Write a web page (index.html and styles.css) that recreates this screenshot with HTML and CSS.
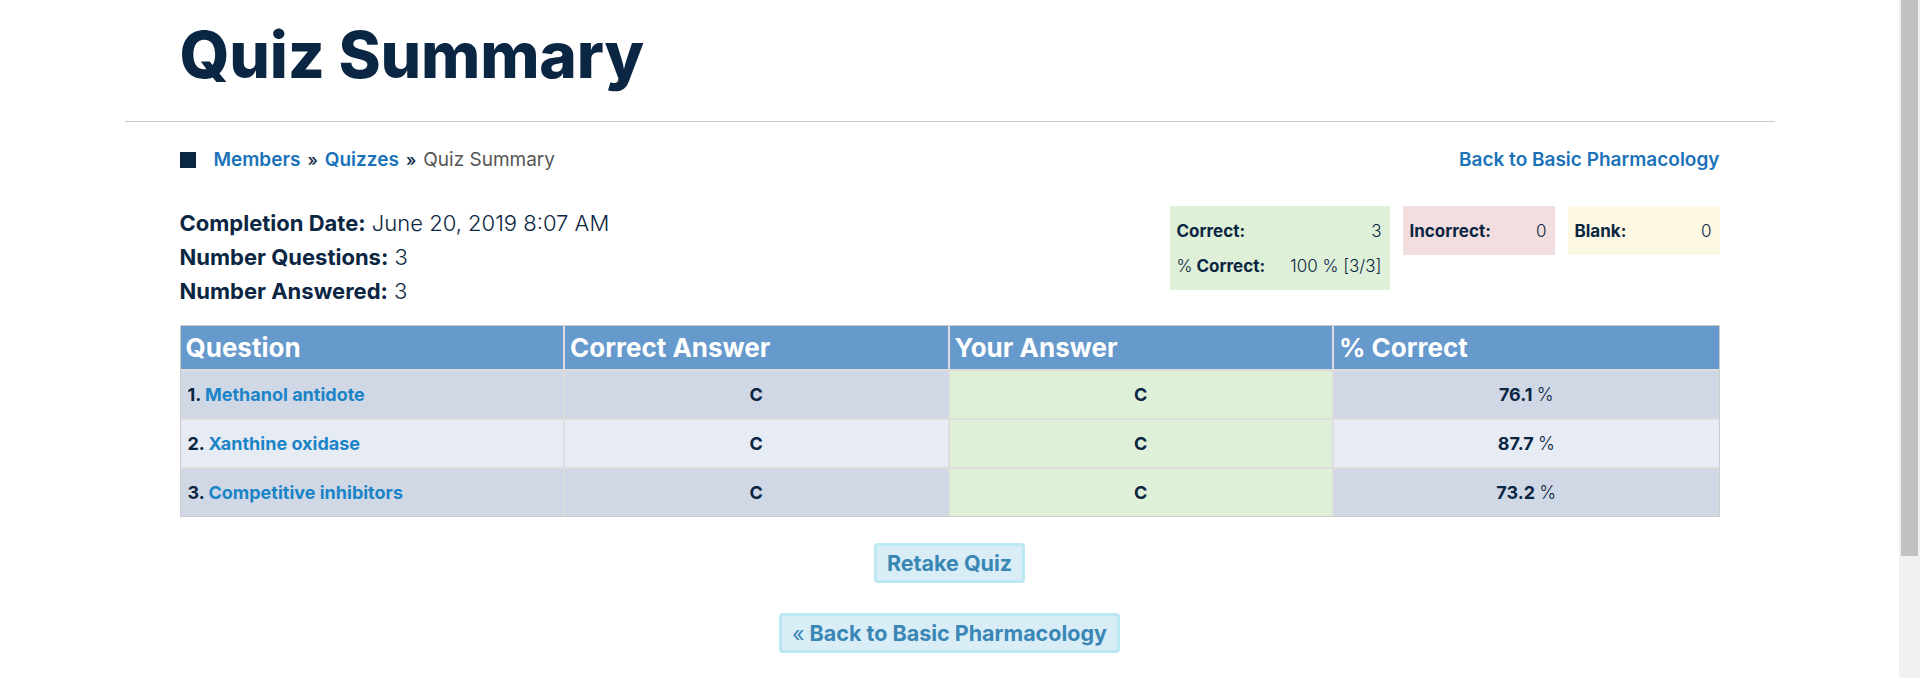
FILE: index.html
```html
<!DOCTYPE html>
<html lang="en">
<head>
<meta charset="utf-8">
<title>Quiz Summary</title>
<link rel="stylesheet" href="styles.css">
</head>
<body>
<div class="page">
  <div class="main">
    <div class="container">
      <header class="header">
        <h1 class="title">Quiz Summary</h1>
      </header>
      <div class="content">
        <div class="crumbs-row">
          <nav class="crumbs">
            <span class="crumb-icon"></span>
            <a class="crumb-link" href="#">Members</a>
            <span class="sep">»</span>
            <a class="crumb-link" href="#">Quizzes</a>
            <span class="sep">»</span>
            <span class="crumb-current">Quiz Summary</span>
          </nav>
          <a class="back-link" href="#">Back to Basic Pharmacology</a>
        </div>

        <div class="summary">
          <div class="info">
            <div class="info-line"><b>Completion Date:</b> June 20, 2019 8:07 AM</div>
            <div class="info-line"><b>Number Questions:</b> 3</div>
            <div class="info-line"><b>Number Answered:</b> 3</div>
          </div>
          <div class="stats">
            <div class="stat stat-correct">
              <span class="lbl">Correct:</span><span class="val">3</span>
              <span class="lbl"><span class="reg">%</span> Correct:</span><span class="val">100 % [3/3]</span>
            </div>
            <div class="stat stat-incorrect">
              <span class="lbl">Incorrect:</span><span class="val">0</span>
            </div>
            <div class="stat stat-blank">
              <span class="lbl">Blank:</span><span class="val">0</span>
            </div>
          </div>
        </div>

        <table class="results">
          <thead>
            <tr><th>Question</th><th>Correct Answer</th><th>Your Answer</th><th>% Correct</th></tr>
          </thead>
          <tbody>
            <tr>
              <td class="q">1. <a href="#">Methanol antidote</a></td>
              <td class="c">C</td>
              <td class="c yours">C</td>
              <td class="c">76.1 <span class="reg">%</span></td>
            </tr>
            <tr>
              <td class="q">2. <a href="#">Xanthine oxidase</a></td>
              <td class="c">C</td>
              <td class="c yours">C</td>
              <td class="c">87.7 <span class="reg">%</span></td>
            </tr>
            <tr>
              <td class="q">3. <a href="#">Competitive inhibitors</a></td>
              <td class="c">C</td>
              <td class="c yours">C</td>
              <td class="c">73.2 <span class="reg">%</span></td>
            </tr>
          </tbody>
        </table>

        <div class="actions">
          <a class="btn" href="#">Retake Quiz</a>
          <a class="btn" href="#"><span class="laquo">«</span> Back to Basic Pharmacology</a>
        </div>
      </div>
    </div>
  </div>
  <div class="scrollbar"><div class="thumb"></div></div>
</div>
</body>
</html>
```

FILE: styles.css
```css
html, body {
  margin: 0;
  padding: 0;
  background: #ffffff;
}

body {
  font-family: Inter, "Liberation Sans", sans-serif;
  color: #0b2642;
}

a {
  text-decoration: none;
}

.page {
  display: flex;
  height: 678px;
  overflow: hidden;
}

.main {
  flex: 1;
  min-width: 0;
}

.container {
  width: 1650px;
  margin: 0 auto;
}

.header {
  height: 122px;
  box-sizing: border-box;
  padding: 23px 55px 0;
  border-bottom: 1px solid #cccccc;
}

.title {
  margin: 0;
  font-family: Inter, sans-serif;
  font-weight: 800;
  font-size: 64px;
  line-height: 1;
  color: #0b2642;
  letter-spacing: -0.2px;
}

.content {
  padding: 0 55px;
}

.crumbs-row {
  margin-top: 26px;
  display: flex;
  justify-content: space-between;
  align-items: center;
  height: 24px;
  font-size: 19px;
  line-height: 24px;
}

.crumbs {
  display: flex;
  align-items: center;
}

.crumb-icon {
  width: 16px;
  height: 16px;
  background: #0b2642;
  margin-right: 18px;
}

.crumb-link,
.back-link {
  color: #1a72b8;
  font-weight: 600;
}

.sep {
  color: #0b2642;
  font-weight: 500;
  font-size: 17px;
  margin: 0 7px;
}

.crumb-current {
  color: #555555;
  font-weight: 400;
}

.summary {
  margin-top: 34px;
  display: flex;
  justify-content: space-between;
  align-items: flex-start;
}

.info {
  font-size: 22px;
  line-height: 34px;
  font-weight: 300;
  color: #0b2642;
}

.info b {
  font-weight: 700;
}

.stats {
  display: flex;
  gap: 13px;
  align-items: flex-start;
}

.stat {
  display: grid;
  grid-template-columns: auto auto;
  column-gap: 16px;
  grid-auto-rows: 35px;
  align-items: center;
  padding: 7px 8px 7px 7px;
  font-size: 17px;
  color: #0b2642;
}

.stat-correct {
  background: #dff0d8;
  width: 205px;
}

.stat-incorrect {
  background: #f2dede;
  width: 137px;
}

.stat-blank {
  background: #fcf8e3;
  width: 137px;
}

.lbl {
  font-weight: 700;
}

.val {
  text-align: right;
  font-weight: 300;
}

.reg {
  font-weight: 300;
}

.results {
  margin-top: 17px;
  width: 100%;
  border-collapse: separate;
  border-spacing: 0;
  border: 1px solid #cccccc;
  table-layout: fixed;
}

.results th,
.results td {
  border-right: 2px solid #dddddd;
  border-bottom: 2px solid #dddddd;
  box-sizing: border-box;
}

.results th:last-child,
.results td:last-child {
  border-right: 0;
}

.results tbody tr:last-child td {
  border-bottom: 0;
}

.results th {
  height: 45px;
  padding: 0 5px;
  background: #6699cc;
  color: #ffffff;
  font-size: 26px;
  font-weight: 700;
  text-align: left;
}

.results td {
  height: 49px;
  padding: 0 7px;
  font-size: 18px;
  font-weight: 700;
  color: #0b2642;
}

.results tbody tr:last-child td {
  height: 47px;
}

.results tbody tr:nth-child(odd) td {
  background: #d0d8e6;
}

.results tbody tr:nth-child(even) td {
  background: #e6ebf4;
}

.results tbody tr td.yours {
  background: #dff0d8;
}

.results td.c {
  text-align: center;
}

.results td.q a {
  color: #1a84c7;
}

.actions {
  margin-top: 26px;
  display: flex;
  flex-direction: column;
  align-items: center;
  gap: 30px;
}

.btn {
  display: inline-block;
  padding: 0 10px;
  line-height: 34px;
  border: 3px solid #bce8f1;
  border-radius: 4px;
  background: #d9edf7;
  color: #3a87b5;
  font-size: 21.5px;
  font-weight: 700;
}

.laquo {
  font-weight: 400;
}

.scrollbar {
  width: 17px;
  padding: 0 2px;
  background: #f1f1f1;
  flex-shrink: 0;
}

.thumb {
  height: 556px;
  background: #c1c1c1;
}
```
